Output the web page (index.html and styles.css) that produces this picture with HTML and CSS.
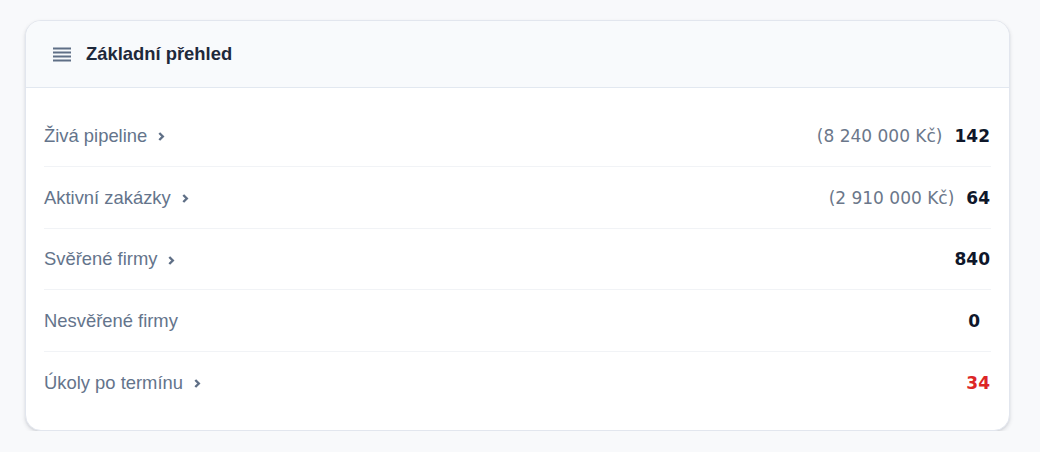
FILE: index.html
```html
<!DOCTYPE html>
<html lang="cs">
<head>
<meta charset="utf-8">
<title>Základní přehled</title>
<link rel="stylesheet" href="styles.css">
</head>
<body>
<section class="card">
  <header class="card-head">
    <svg class="head-icon" width="18" height="15" viewBox="0 0 18 15" aria-hidden="true">
      <path d="M0 1.5H18M0 5.5H18M0 9.5H18M0 13.5H18" stroke="#5f6f86" stroke-width="2" fill="none"/>
    </svg>
    <h2 class="card-title">Základní přehled</h2>
  </header>
  <div class="card-body">
    <div class="row">
      <a class="label link">Živá pipeline <svg class="chev" width="7" height="9" viewBox="0 0 7 9"><path d="M1.3 1L4.8 4.5L1.3 8" stroke="#5f6f86" stroke-width="2.4" fill="none"/></svg></a>
      <div class="values"><span class="amount">(8 240 000 Kč)</span><span class="num">142</span></div>
    </div>
    <div class="row">
      <a class="label link">Aktivní zakázky <svg class="chev" width="7" height="9" viewBox="0 0 7 9"><path d="M1.3 1L4.8 4.5L1.3 8" stroke="#5f6f86" stroke-width="2.4" fill="none"/></svg></a>
      <div class="values"><span class="amount">(2 910 000 Kč)</span><span class="num">64</span></div>
    </div>
    <div class="row">
      <a class="label link">Svěřené firmy <svg class="chev" width="7" height="9" viewBox="0 0 7 9"><path d="M1.3 1L4.8 4.5L1.3 8" stroke="#5f6f86" stroke-width="2.4" fill="none"/></svg></a>
      <div class="values"><span class="num">840</span></div>
    </div>
    <div class="row">
      <span class="label">Nesvěřené firmy</span>
      <div class="values plain"><span class="num">0</span></div>
    </div>
    <div class="row">
      <a class="label link">Úkoly po termínu <svg class="chev" width="7" height="9" viewBox="0 0 7 9"><path d="M1.3 1L4.8 4.5L1.3 8" stroke="#5f6f86" stroke-width="2.4" fill="none"/></svg></a>
      <div class="values"><span class="num danger">34</span></div>
    </div>
  </div>
</section>
</body>
</html>
```
FILE: styles.css
```css
html, body {
  margin: 0;
  padding: 0;
  background: #f8f9fb;
}
body {
  padding: 20px 0 0 25px;
  font-family: "Liberation Sans", Arial, sans-serif;
}
.card {
  box-sizing: border-box;
  width: 985px;
  background: #ffffff;
  border: 1px solid #e2e6ee;
  border-radius: 16px;
  box-shadow: 0 2px 4px rgba(15, 23, 42, 0.12), 0 1px 2px rgba(15, 23, 42, 0.06);
  overflow: hidden;
}
.card-head {
  display: flex;
  align-items: center;
  gap: 15px;
  height: 66px;
  padding: 0 0 0 27px;
  background: #f8fafc;
  border-bottom: 1px solid #e2e8f0;
}
.head-icon {
  display: block;
  flex: none;
}
.card-title {
  margin: 0;
  font-size: 18.4px;
  font-weight: 700;
  color: #1e293b;
}
.card-body {
  padding: 17px 18px 17px 18px;
}
.row {
  display: flex;
  align-items: center;
  justify-content: space-between;
  height: 61px;
  border-bottom: 1px solid #f1f3f6;
}
.row:nth-child(3) {
  height: 60px;
}
.row:last-child {
  border-bottom: none;
}
.label {
  display: flex;
  align-items: center;
  gap: 11px;
  font-size: 18.4px;
  color: #64748b;
  text-decoration: none;
}
.chev {
  display: block;
  margin-top: 2px;
}
.values {
  display: flex;
  align-items: center;
  gap: 12px;
  padding-right: 1px;
  font-family: "DejaVu Sans", Verdana, sans-serif;
  font-size: 17px;
}
.values.plain {
  padding-right: 11px;
}
.amount {
  color: #6b778a;
}
.num {
  font-weight: 700;
  color: #0f172a;
}
.num.danger {
  color: #dc2626;
}
```
